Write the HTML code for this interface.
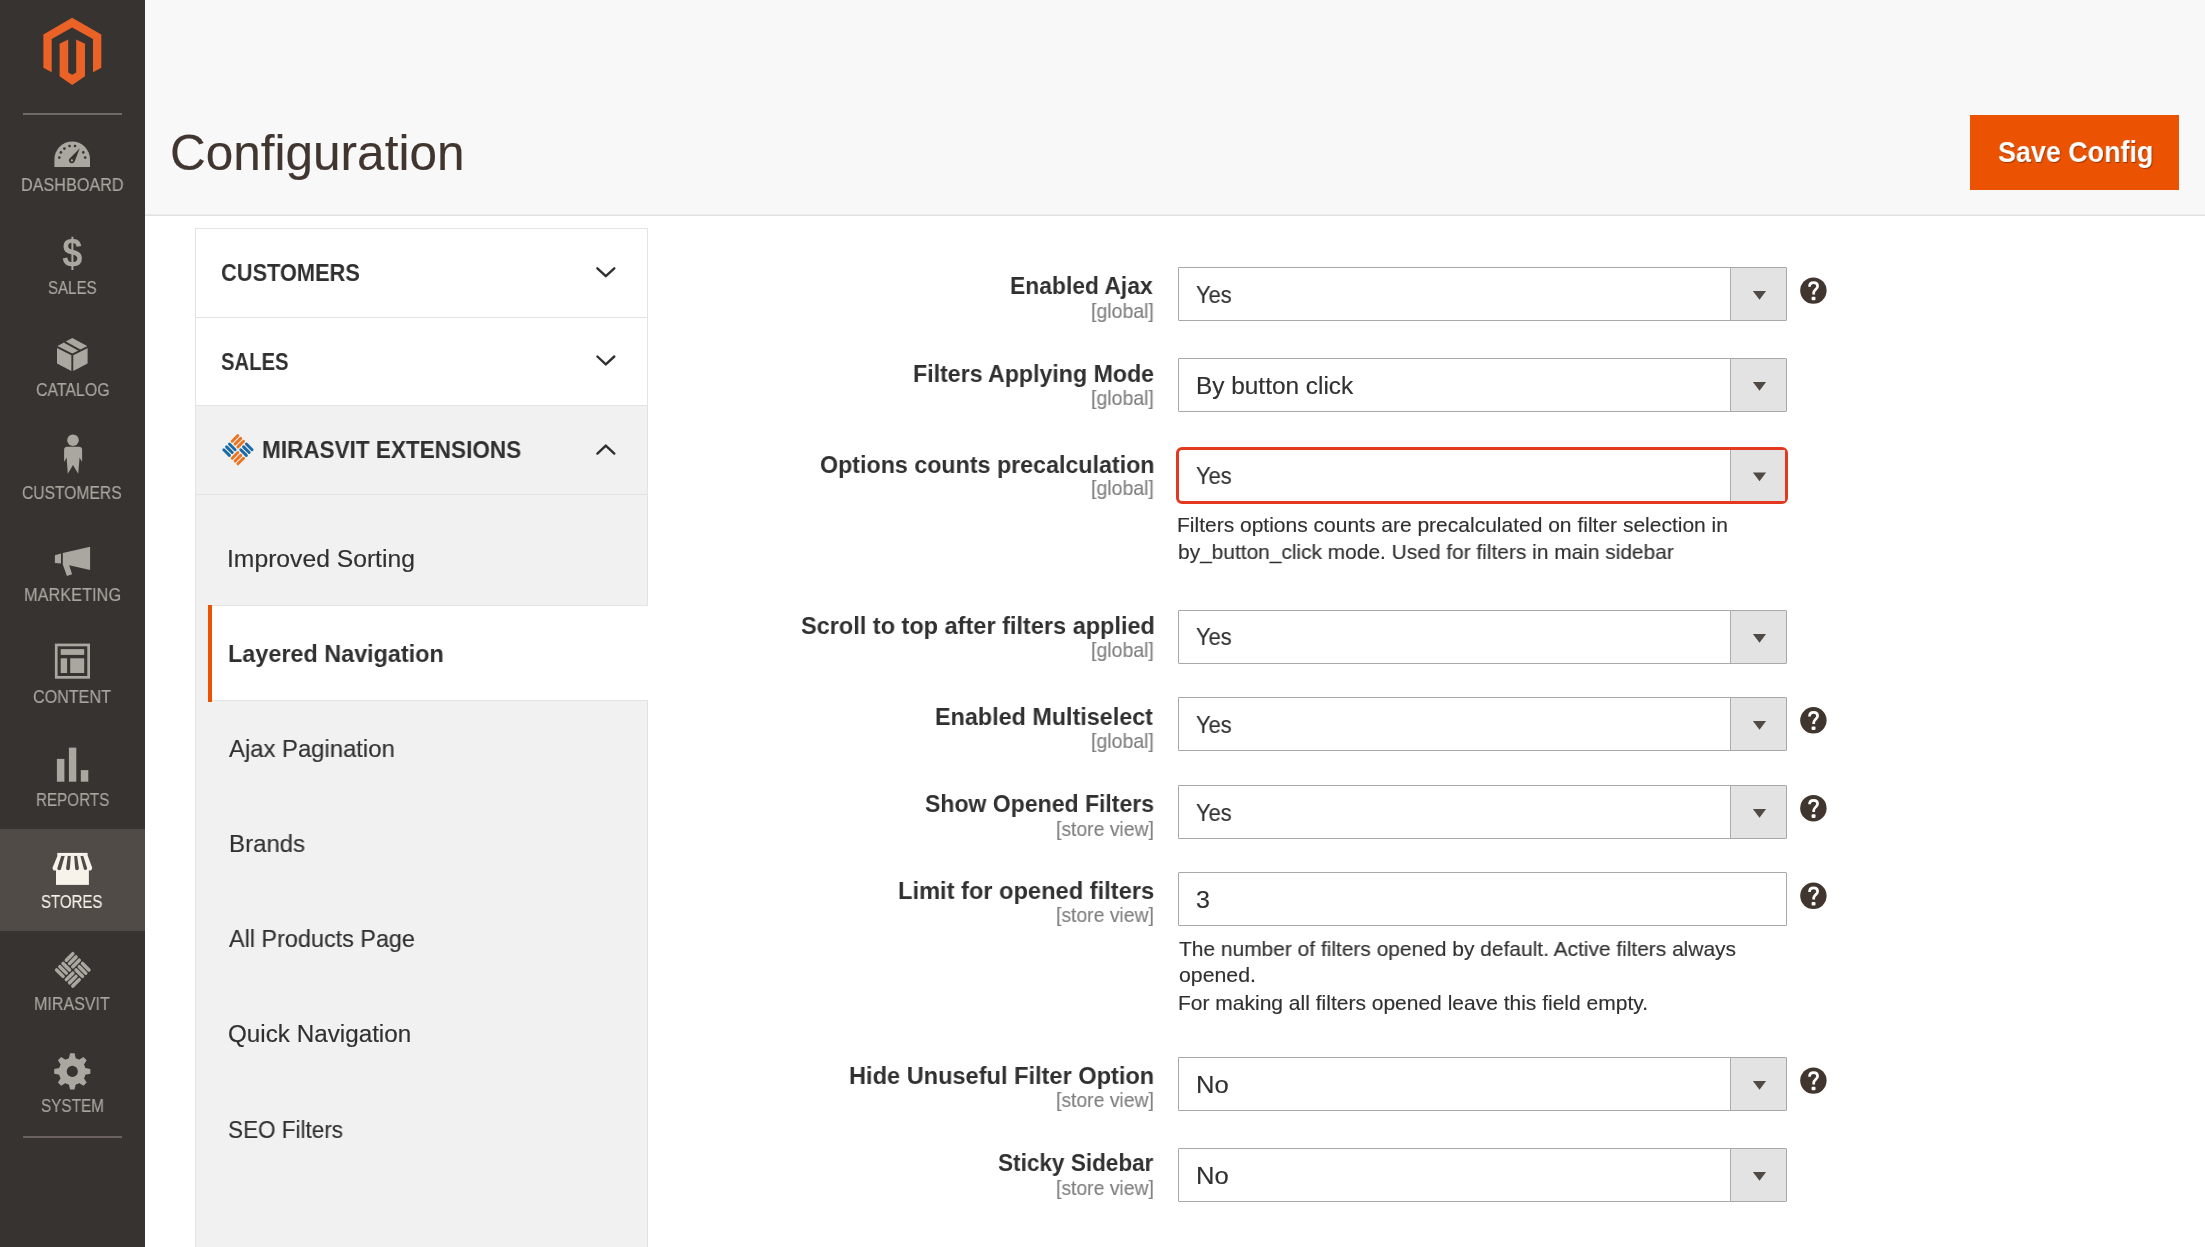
<!DOCTYPE html><html><head><meta charset="utf-8"><style>
html,body{margin:0;padding:0;}
body{width:2205px;height:1247px;overflow:hidden;position:relative;background:#ffffff;font-family:"Liberation Sans",sans-serif;}
.t{position:absolute;white-space:nowrap;transform-origin:0 0;will-change:transform;}
#sidebar{position:absolute;left:0;top:0;width:145px;height:1247px;background:#373330;}
#active{position:absolute;left:0;top:829px;width:145px;height:102px;background:#504b46;}
#header{position:absolute;left:145px;top:0;width:2060px;height:214px;background:#f8f8f8;}
#hline1{position:absolute;left:145px;top:214px;width:2060px;height:1px;background:#ececec;}
#hline2{position:absolute;left:145px;top:215px;width:2060px;height:1px;background:#e1e1e1;}
#sideicons{position:absolute;left:0;top:0;}
#panelsvg,#formsvg{position:absolute;left:0;top:0;}
#savebtn{position:absolute;left:1970px;top:115px;width:209px;height:75px;background:#eb5202;}
#panel{position:absolute;left:195px;top:228px;width:451px;height:1100px;border:1px solid #e3e3e3;background:#f1f1f1;}
.prow{position:absolute;left:196px;width:451px;}
.sep{position:absolute;left:196px;width:451px;height:1px;background:#e3e3e3;}
#activeitem{position:absolute;left:208px;top:605px;width:440px;height:96px;background:#fff;}
#activeitem{border-top:1px solid #e3e3e3;border-bottom:1px solid #e3e3e3;box-sizing:border-box;}
#activebar{position:absolute;left:208px;top:605px;width:4px;height:97px;background:#eb5202;}
.sel{position:absolute;left:1178px;width:607px;height:52px;border:1px solid #a8a8a8;border-radius:1px;background:#fff;}
.sel.red{left:1176px;width:606px;height:50.6px;border:3px solid #e3391f;border-radius:6px;}
.arrowbox{position:absolute;left:1730px;width:56px;height:52px;background:#e3e3e3;border-left:1px solid #adadad;box-sizing:border-box;}
</style></head><body><div id="sidebar"></div>
<div id="header"></div>
<div id="hline1"></div><div id="hline2"></div>
<div id="active"></div>
<div class="t" style="left:20.63px;top:177.45px;font-size:17.7px;line-height:17.7px;-webkit-text-stroke:0.15px currentColor;color:#aaa6a0;transform:scaleX(0.9153);">DASHBOARD</div>
<div class="t" style="left:47.85px;top:280.15px;font-size:17.7px;line-height:17.7px;-webkit-text-stroke:0.15px currentColor;color:#aaa6a0;transform:scaleX(0.8523);">SALES</div>
<div class="t" style="left:35.71px;top:382.05px;font-size:17.7px;line-height:17.7px;-webkit-text-stroke:0.15px currentColor;color:#aaa6a0;transform:scaleX(0.8975);">CATALOG</div>
<div class="t" style="left:22.43px;top:485.15px;font-size:17.7px;line-height:17.7px;-webkit-text-stroke:0.15px currentColor;color:#aaa6a0;transform:scaleX(0.8844);">CUSTOMERS</div>
<div class="t" style="left:23.71px;top:587.05px;font-size:17.7px;line-height:17.7px;-webkit-text-stroke:0.15px currentColor;color:#aaa6a0;transform:scaleX(0.9236);">MARKETING</div>
<div class="t" style="left:33.30px;top:689.05px;font-size:17.7px;line-height:17.7px;-webkit-text-stroke:0.15px currentColor;color:#aaa6a0;transform:scaleX(0.9112);">CONTENT</div>
<div class="t" style="left:35.51px;top:791.75px;font-size:17.7px;line-height:17.7px;-webkit-text-stroke:0.15px currentColor;color:#aaa6a0;transform:scaleX(0.8602);">REPORTS</div>
<div class="t" style="left:41.46px;top:893.95px;font-size:17.7px;line-height:17.7px;-webkit-text-stroke:0.15px currentColor;color:#f7f3eb;transform:scaleX(0.8493);">STORES</div>
<div class="t" style="left:34.44px;top:996.35px;font-size:17.7px;line-height:17.7px;-webkit-text-stroke:0.15px currentColor;color:#aaa6a0;transform:scaleX(0.9075);">MIRASVIT</div>
<div class="t" style="left:40.74px;top:1098.45px;font-size:17.7px;line-height:17.7px;-webkit-text-stroke:0.15px currentColor;color:#aaa6a0;transform:scaleX(0.8650);">SYSTEM</div>
<svg id="sideicons" width="145" height="1247" viewBox="0 0 145 1247"><path fill="#eb6227" d="M72.1,17.7 L101.3,34.4 L101.3,67.8 L93,72.3 L93,39.1 L72.1,27.6 L51.7,39.1 L51.7,72.3 L43.4,67.8 L43.4,34.4 Z"/><path fill="#eb6227" d="M59.6,43.8 L68.2,39.4 L68.2,72.6 L72.2,74.8 L76.2,72.6 L76.2,39.4 L85,43.8 L85,76.3 L72.2,85 L59.6,76.3 Z"/><rect x="23" y="113" width="99" height="2" fill="#6f6a66"/><path fill="#aaa6a0" d="M54.4,167 L54.4,159.3 A17.8,17.8 0 0 1 90,159.3 L90,167 Z"/><circle cx="59.3" cy="157.6" r="1.3" fill="#373330"/><circle cx="60.9" cy="152.4" r="1.3" fill="#373330"/><circle cx="64.4" cy="148.6" r="1.3" fill="#373330"/><circle cx="69.5" cy="146" r="1.3" fill="#373330"/><circle cx="75" cy="146" r="1.3" fill="#373330"/><circle cx="83.3" cy="152.4" r="1.3" fill="#373330"/><circle cx="85.2" cy="157.6" r="1.3" fill="#373330"/><path fill="#373330" d="M69.2,159 L79.8,148.3 L74.6,161.6 A3,3 0 0 1 69.2,159 Z"/><circle cx="71.9" cy="160.4" r="1.1" fill="#aaa6a0"/><text x="0" y="0" font-family="Liberation Sans" font-weight="bold" font-size="40" fill="#aaa6a0" transform="translate(62.25,266.8) scale(0.905,1.014)">$</text><path fill="#aaa6a0" d="M72.3,338 L87.6,346.3 L87.6,363.4 L72.3,371.4 L57,363.4 L57,346.3 Z"/><path fill="none" stroke="#373330" stroke-width="1.9" d="M56,346.3 L72.3,354.6 L89,346.3 M72.3,354.6 L72.3,372 M64.5,341.8 L80.3,350.6"/><circle cx="73" cy="440.2" r="5.8" fill="#aaa6a0"/><path fill="#aaa6a0" d="M64.1,462 L64.1,450 Q64.1,446.8 67.3,446.8 L78.9,446.8 Q82.1,446.8 82.1,450 L82.1,462 L79.6,457.6 L78.2,473.8 L73,465 L67.8,473.8 L66.6,457.6 Z"/><path fill="#aaa6a0" d="M54.9,555.2 L61,553.5 L61,563.4 L54.9,562.9 Z M62.8,553 L90.1,546.7 L90.1,570 L69.2,565.3 L72.1,574.3 L66.9,576 L62.8,564.6 Z"/><rect x="56.25" y="644.95" width="32.4" height="32.4" fill="none" stroke="#aaa6a0" stroke-width="2.7"/><rect x="60.7" y="649.1" width="23.5" height="5.8" fill="#aaa6a0"/><rect x="60.7" y="658.3" width="6.4" height="14.7" fill="#aaa6a0"/><rect x="70.2" y="658.3" width="14" height="14.7" fill="#aaa6a0"/><rect x="56.9" y="758.9" width="7.5" height="22.8" fill="#aaa6a0"/><rect x="68.9" y="747.6" width="7.4" height="34.1" fill="#aaa6a0"/><rect x="80.8" y="770.1" width="7.5" height="11.6" fill="#aaa6a0"/><rect x="57.3" y="852.9" width="30.3" height="3" fill="#f7f3eb"/><path fill="#f7f3eb" d="M57.6,855.5 L87.6,855.5 L92.1,867.5 Q92.3,870.6 89.5,870.6 L55.2,870.6 Q52.3,870.6 52.6,867.5 Z"/><rect x="56" y="869" width="32.9" height="15.9" fill="#f7f3eb"/><path fill="#504b46" d="M61.2,856 L64.7,856 L61.2,868.3 A1.95,1.95 0 0 1 57.3,868.3 Z"/><path fill="#504b46" d="M67.7,856 L70.8,856 L69.9,868.3 A1.90,1.90 0 0 1 66.1,868.3 Z"/><path fill="#504b46" d="M74.2,856 L77.1,856 L78.9,868.3 A1.90,1.90 0 0 1 75.1,868.3 Z"/><path fill="#504b46" d="M80.4,856 L83.3,856 L87.2,868.3 A1.80,1.80 0 0 1 83.6,868.3 Z"/><g transform="translate(72.8,969.9) rotate(45)"><rect x="-13.20" y="-13.20" width="3.50" height="12.65" rx="1.75" fill="#aaa6a0"/><rect x="-8.62" y="-13.20" width="3.50" height="12.65" rx="1.75" fill="#aaa6a0"/><rect x="-4.05" y="-13.20" width="3.50" height="12.65" rx="1.75" fill="#aaa6a0"/><rect x="0.55" y="-13.20" width="12.65" height="3.50" rx="1.75" fill="#aaa6a0"/><rect x="0.55" y="-8.62" width="12.65" height="3.50" rx="1.75" fill="#aaa6a0"/><rect x="0.55" y="-4.05" width="12.65" height="3.50" rx="1.75" fill="#aaa6a0"/><rect x="-13.20" y="0.55" width="12.65" height="3.50" rx="1.75" fill="#aaa6a0"/><rect x="-13.20" y="5.12" width="12.65" height="3.50" rx="1.75" fill="#aaa6a0"/><rect x="-13.20" y="9.70" width="12.65" height="3.50" rx="1.75" fill="#aaa6a0"/><rect x="0.55" y="0.55" width="3.50" height="12.65" rx="1.75" fill="#aaa6a0"/><rect x="5.12" y="0.55" width="3.50" height="12.65" rx="1.75" fill="#aaa6a0"/><rect x="9.70" y="0.55" width="3.50" height="12.65" rx="1.75" fill="#aaa6a0"/></g><path fill="#aaa6a0" d="M68.87,1058.45 L70.02,1053.34 L74.58,1053.34 L75.73,1058.45 L79.03,1059.81 L83.45,1057.02 L86.68,1060.25 L83.89,1064.67 L85.25,1067.97 L90.36,1069.12 L90.36,1073.68 L85.25,1074.83 L83.89,1078.13 L86.68,1082.55 L83.45,1085.78 L79.03,1082.99 L75.73,1084.35 L74.58,1089.46 L70.02,1089.46 L68.87,1084.35 L65.57,1082.99 L61.15,1085.78 L57.92,1082.55 L60.71,1078.13 L59.35,1074.83 L54.24,1073.68 L54.24,1069.12 L59.35,1067.97 L60.71,1064.67 L57.92,1060.25 L61.15,1057.02 L65.57,1059.81 Z"/><circle cx="72.3" cy="1071.4" r="13.4" fill="#aaa6a0"/><circle cx="72.3" cy="1071.4" r="5.55" fill="#373330"/><rect x="23" y="1136" width="99" height="2" fill="#6b6260"/></svg>
<div class="t" style="left:169.80px;top:127.55px;font-size:49.5px;line-height:49.5px;-webkit-text-stroke:0.15px currentColor;color:#41362f;">Configuration</div>
<div id="savebtn"></div>
<div class="t" style="left:1997.69px;top:138.00px;font-size:29.2px;line-height:29.2px;font-weight:bold;color:#ffffff;transform:scaleX(0.9210);text-shadow:1px 1px 1px rgba(0,0,0,0.35);">Save Config</div>
<div id="panel"></div>
<div class="prow" style="top:229px;height:88px;background:#fff"></div>
<div class="prow" style="top:317px;height:88px;background:#fff"></div>
<div class="prow" style="top:405px;height:90px;background:#f1f1f1"></div>
<div class="sep" style="top:317px"></div><div class="sep" style="top:405px"></div><div class="sep" style="top:494px"></div>
<div id="activeitem"></div><div id="activebar"></div>
<div class="t" style="left:220.91px;top:261.25px;font-size:24.5px;line-height:24.5px;font-weight:bold;color:#303030;transform:scaleX(0.8895);">CUSTOMERS</div>
<div class="t" style="left:221.18px;top:349.95px;font-size:24.5px;line-height:24.5px;font-weight:bold;color:#303030;transform:scaleX(0.8275);">SALES</div>
<div class="t" style="left:262.11px;top:438.45px;font-size:24.5px;line-height:24.5px;font-weight:bold;color:#303030;transform:scaleX(0.9196);">MIRASVIT EXTENSIONS</div>
<div class="t" style="left:227.20px;top:546.90px;font-size:24.2px;line-height:24.2px;-webkit-text-stroke:0.15px currentColor;color:#303030;transform:scaleX(1.0202);">Improved Sorting</div>
<div class="t" style="left:228.43px;top:642.30px;font-size:24.2px;line-height:24.2px;font-weight:bold;color:#303030;transform:scaleX(0.9673);">Layered Navigation</div>
<div class="t" style="left:228.98px;top:737.00px;font-size:24.2px;line-height:24.2px;-webkit-text-stroke:0.15px currentColor;color:#303030;transform:scaleX(0.9859);">Ajax Pagination</div>
<div class="t" style="left:228.51px;top:832.10px;font-size:24.2px;line-height:24.2px;-webkit-text-stroke:0.15px currentColor;color:#303030;transform:scaleX(0.9932);">Brands</div>
<div class="t" style="left:229.18px;top:927.30px;font-size:24.2px;line-height:24.2px;-webkit-text-stroke:0.15px currentColor;color:#303030;transform:scaleX(0.9671);">All Products Page</div>
<div class="t" style="left:228.17px;top:1022.40px;font-size:24.2px;line-height:24.2px;-webkit-text-stroke:0.15px currentColor;color:#303030;transform:scaleX(1.0021);">Quick Navigation</div>
<div class="t" style="left:228.25px;top:1117.50px;font-size:24.2px;line-height:24.2px;-webkit-text-stroke:0.15px currentColor;color:#303030;transform:scaleX(0.9303);">SEO Filters</div>
<svg id="panelsvg" width="2205" height="1247" viewBox="0 0 2205 1247"><path fill="none" stroke="#303030" stroke-width="2.4" stroke-linecap="round" stroke-linejoin="round" d="M597.4,268.3 L605.8,276.2 L614.3,268.3"/><path fill="none" stroke="#303030" stroke-width="2.4" stroke-linecap="round" stroke-linejoin="round" d="M597.4,356.5 L605.8,364.4 L614.3,356.5"/><path fill="none" stroke="#303030" stroke-width="2.4" stroke-linecap="round" stroke-linejoin="round" d="M597.4,453.6 L605.8,445.6 L614.3,453.6"/><g transform="translate(237.9,449.7) rotate(45)"><rect x="-11.45" y="-11.45" width="2.90" height="10.90" rx="1.45" fill="#eb7423"/><rect x="-7.45" y="-11.45" width="2.90" height="10.90" rx="1.45" fill="#eb7423"/><rect x="-3.45" y="-11.45" width="2.90" height="10.90" rx="1.45" fill="#eb7423"/><rect x="0.55" y="-11.45" width="10.90" height="2.90" rx="1.45" fill="#1b6aa5"/><rect x="0.55" y="-7.45" width="10.90" height="2.90" rx="1.45" fill="#1b6aa5"/><rect x="0.55" y="-3.45" width="10.90" height="2.90" rx="1.45" fill="#1b6aa5"/><rect x="-11.45" y="0.55" width="10.90" height="2.90" rx="1.45" fill="#1b6aa5"/><rect x="-11.45" y="4.55" width="10.90" height="2.90" rx="1.45" fill="#1b6aa5"/><rect x="-11.45" y="8.55" width="10.90" height="2.90" rx="1.45" fill="#1b6aa5"/><rect x="0.55" y="0.55" width="2.90" height="10.90" rx="1.45" fill="#eb7423"/><rect x="4.55" y="0.55" width="2.90" height="10.90" rx="1.45" fill="#eb7423"/><rect x="8.55" y="0.55" width="2.90" height="10.90" rx="1.45" fill="#eb7423"/></g></svg>
<div class="t" style="left:1010.38px;top:274.10px;font-size:24.4px;line-height:24.4px;font-weight:bold;color:#303030;transform:scaleX(0.9370);">Enabled Ajax</div>
<div class="t" style="left:1090.57px;top:300.50px;font-size:20.4px;line-height:20.4px;-webkit-text-stroke:0.15px currentColor;color:#808080;transform:scaleX(0.9562);">[global]</div>
<div class="sel" style="top:267px"></div>
<div class="arrowbox" style="top:268px"></div>
<div class="t" style="left:1196.34px;top:283.20px;font-size:24.4px;line-height:24.4px;-webkit-text-stroke:0.15px currentColor;color:#303030;transform:scaleX(0.8993);">Yes</div>
<div class="t" style="left:912.76px;top:362.20px;font-size:24.4px;line-height:24.4px;font-weight:bold;color:#303030;transform:scaleX(0.9493);">Filters Applying Mode</div>
<div class="t" style="left:1090.57px;top:387.80px;font-size:20.4px;line-height:20.4px;-webkit-text-stroke:0.15px currentColor;color:#808080;transform:scaleX(0.9562);">[global]</div>
<div class="sel" style="top:358px"></div>
<div class="arrowbox" style="top:359px"></div>
<div class="t" style="left:1196.10px;top:374.00px;font-size:24.4px;line-height:24.4px;-webkit-text-stroke:0.15px currentColor;color:#303030;">By button click</div>
<div class="t" style="left:819.95px;top:452.50px;font-size:24.4px;line-height:24.4px;font-weight:bold;color:#303030;transform:scaleX(0.9531);">Options counts precalculation</div>
<div class="t" style="left:1090.57px;top:478.40px;font-size:20.4px;line-height:20.4px;-webkit-text-stroke:0.15px currentColor;color:#808080;transform:scaleX(0.9562);">[global]</div>
<div class="sel red" style="top:447px"></div>
<div class="arrowbox" style="top:450px;height:50.5px;width:55px"></div>
<div class="t" style="left:1196.34px;top:464.30px;font-size:24.4px;line-height:24.4px;-webkit-text-stroke:0.15px currentColor;color:#303030;transform:scaleX(0.8993);">Yes</div>
<div class="t" style="left:800.68px;top:614.20px;font-size:24.4px;line-height:24.4px;font-weight:bold;color:#303030;transform:scaleX(0.9637);">Scroll to top after filters applied</div>
<div class="t" style="left:1090.57px;top:640.00px;font-size:20.4px;line-height:20.4px;-webkit-text-stroke:0.15px currentColor;color:#808080;transform:scaleX(0.9562);">[global]</div>
<div class="sel" style="top:610px"></div>
<div class="arrowbox" style="top:611px"></div>
<div class="t" style="left:1196.34px;top:625.20px;font-size:24.4px;line-height:24.4px;-webkit-text-stroke:0.15px currentColor;color:#303030;transform:scaleX(0.8993);">Yes</div>
<div class="t" style="left:935.24px;top:704.80px;font-size:24.4px;line-height:24.4px;font-weight:bold;color:#303030;transform:scaleX(0.9573);">Enabled Multiselect</div>
<div class="t" style="left:1090.57px;top:730.60px;font-size:20.4px;line-height:20.4px;-webkit-text-stroke:0.15px currentColor;color:#808080;transform:scaleX(0.9562);">[global]</div>
<div class="sel" style="top:697px"></div>
<div class="arrowbox" style="top:698px"></div>
<div class="t" style="left:1196.34px;top:713.00px;font-size:24.4px;line-height:24.4px;-webkit-text-stroke:0.15px currentColor;color:#303030;transform:scaleX(0.8993);">Yes</div>
<div class="t" style="left:924.89px;top:791.50px;font-size:24.4px;line-height:24.4px;font-weight:bold;color:#303030;transform:scaleX(0.9442);">Show Opened Filters</div>
<div class="t" style="left:1055.58px;top:818.70px;font-size:20.4px;line-height:20.4px;-webkit-text-stroke:0.15px currentColor;color:#808080;transform:scaleX(0.9488);">[store view]</div>
<div class="sel" style="top:785px"></div>
<div class="arrowbox" style="top:786px"></div>
<div class="t" style="left:1196.34px;top:800.60px;font-size:24.4px;line-height:24.4px;-webkit-text-stroke:0.15px currentColor;color:#303030;transform:scaleX(0.8993);">Yes</div>
<div class="t" style="left:897.93px;top:879.30px;font-size:24.4px;line-height:24.4px;font-weight:bold;color:#303030;transform:scaleX(0.9691);">Limit for opened filters</div>
<div class="t" style="left:1055.58px;top:905.30px;font-size:20.4px;line-height:20.4px;-webkit-text-stroke:0.15px currentColor;color:#808080;transform:scaleX(0.9488);">[store view]</div>
<div class="sel" style="top:872px"></div>
<div class="t" style="left:1195.77px;top:887.60px;font-size:24.4px;line-height:24.4px;-webkit-text-stroke:0.15px currentColor;color:#303030;transform:scaleX(1.0261);">3</div>
<div class="t" style="left:849.33px;top:1064.30px;font-size:24.4px;line-height:24.4px;font-weight:bold;color:#303030;transform:scaleX(0.9665);">Hide Unuseful Filter Option</div>
<div class="t" style="left:1055.58px;top:1090.30px;font-size:20.4px;line-height:20.4px;-webkit-text-stroke:0.15px currentColor;color:#808080;transform:scaleX(0.9488);">[store view]</div>
<div class="sel" style="top:1057px"></div>
<div class="arrowbox" style="top:1058px"></div>
<div class="t" style="left:1195.70px;top:1073.40px;font-size:24.4px;line-height:24.4px;-webkit-text-stroke:0.15px currentColor;color:#303030;transform:scaleX(1.0489);">No</div>
<div class="t" style="left:997.81px;top:1151.40px;font-size:24.4px;line-height:24.4px;font-weight:bold;color:#303030;transform:scaleX(0.9246);">Sticky Sidebar</div>
<div class="t" style="left:1055.58px;top:1177.80px;font-size:20.4px;line-height:20.4px;-webkit-text-stroke:0.15px currentColor;color:#808080;transform:scaleX(0.9488);">[store view]</div>
<div class="sel" style="top:1148px"></div>
<div class="arrowbox" style="top:1149px"></div>
<div class="t" style="left:1195.70px;top:1163.90px;font-size:24.4px;line-height:24.4px;-webkit-text-stroke:0.15px currentColor;color:#303030;transform:scaleX(1.0489);">No</div>
<svg id="formsvg" width="2205" height="1247" viewBox="0 0 2205 1247"><path fill="#514943" d="M1752.9,291 L1766.1,291 L1759.5,299.7 Z"/><g transform="translate(0,0.10)"><circle cx="1813.4" cy="290.5" r="13.2" fill="#41362f"/><path fill="none" stroke="#fff" stroke-width="2.7" d="M1809.5,286.6 C1809.5,283.9 1811.3,282.6 1813.6,282.6 C1816.1,282.6 1817.6,284.1 1817.6,286.1 C1817.6,289 1813.7,289.8 1813.7,292.6 L1813.7,294.3"/><rect x="1811.6" y="296.6" width="3.9" height="3.6" rx="1" fill="#fff"/></g><path fill="#514943" d="M1752.9,382 L1766.1,382 L1759.5,390.7 Z"/><path fill="#514943" d="M1752.9,472.5 L1766.1,472.5 L1759.5,481.2 Z"/><path fill="#514943" d="M1752.9,634 L1766.1,634 L1759.5,642.7 Z"/><path fill="#514943" d="M1752.9,721 L1766.1,721 L1759.5,729.7 Z"/><g transform="translate(0,429.80)"><circle cx="1813.4" cy="290.5" r="13.2" fill="#41362f"/><path fill="none" stroke="#fff" stroke-width="2.7" d="M1809.5,286.6 C1809.5,283.9 1811.3,282.6 1813.6,282.6 C1816.1,282.6 1817.6,284.1 1817.6,286.1 C1817.6,289 1813.7,289.8 1813.7,292.6 L1813.7,294.3"/><rect x="1811.6" y="296.6" width="3.9" height="3.6" rx="1" fill="#fff"/></g><path fill="#514943" d="M1752.9,809 L1766.1,809 L1759.5,817.7 Z"/><g transform="translate(0,517.70)"><circle cx="1813.4" cy="290.5" r="13.2" fill="#41362f"/><path fill="none" stroke="#fff" stroke-width="2.7" d="M1809.5,286.6 C1809.5,283.9 1811.3,282.6 1813.6,282.6 C1816.1,282.6 1817.6,284.1 1817.6,286.1 C1817.6,289 1813.7,289.8 1813.7,292.6 L1813.7,294.3"/><rect x="1811.6" y="296.6" width="3.9" height="3.6" rx="1" fill="#fff"/></g><g transform="translate(0,605.30)"><circle cx="1813.4" cy="290.5" r="13.2" fill="#41362f"/><path fill="none" stroke="#fff" stroke-width="2.7" d="M1809.5,286.6 C1809.5,283.9 1811.3,282.6 1813.6,282.6 C1816.1,282.6 1817.6,284.1 1817.6,286.1 C1817.6,289 1813.7,289.8 1813.7,292.6 L1813.7,294.3"/><rect x="1811.6" y="296.6" width="3.9" height="3.6" rx="1" fill="#fff"/></g><path fill="#514943" d="M1752.9,1081 L1766.1,1081 L1759.5,1089.7 Z"/><g transform="translate(0,790.10)"><circle cx="1813.4" cy="290.5" r="13.2" fill="#41362f"/><path fill="none" stroke="#fff" stroke-width="2.7" d="M1809.5,286.6 C1809.5,283.9 1811.3,282.6 1813.6,282.6 C1816.1,282.6 1817.6,284.1 1817.6,286.1 C1817.6,289 1813.7,289.8 1813.7,292.6 L1813.7,294.3"/><rect x="1811.6" y="296.6" width="3.9" height="3.6" rx="1" fill="#fff"/></g><path fill="#514943" d="M1752.9,1172 L1766.1,1172 L1759.5,1180.7 Z"/></svg>
<div class="t" style="left:1177.45px;top:514.30px;font-size:21px;line-height:21px;-webkit-text-stroke:0.15px currentColor;color:#303030;">Filters options counts are precalculated on filter selection in</div>
<div class="t" style="left:1177.83px;top:540.60px;font-size:21px;line-height:21px;-webkit-text-stroke:0.15px currentColor;color:#303030;transform:scaleX(0.9947);">by_button_click mode. Used for filters in main sidebar</div>
<div class="t" style="left:1178.90px;top:937.60px;font-size:21px;line-height:21px;-webkit-text-stroke:0.15px currentColor;color:#303030;transform:scaleX(0.9963);">The number of filters opened by default. Active filters always</div>
<div class="t" style="left:1178.51px;top:964.40px;font-size:21px;line-height:21px;-webkit-text-stroke:0.15px currentColor;color:#303030;transform:scaleX(1.0133);">opened.</div>
<div class="t" style="left:1177.65px;top:991.90px;font-size:21px;line-height:21px;-webkit-text-stroke:0.15px currentColor;color:#303030;">For making all filters opened leave this field empty.</div></body></html>
